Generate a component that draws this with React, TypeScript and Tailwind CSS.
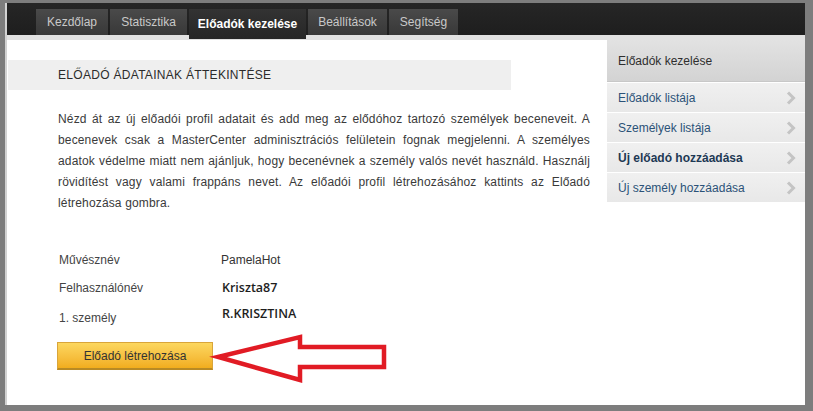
import React from "react";

const tabs = [
  { label: "Kezdőlap", w: 72 },
  { label: "Statisztika", w: 77 },
  { label: "Előadók kezelése", w: 117, active: true },
  { label: "Beállítások", w: 79 },
  { label: "Segítség", w: 69 },
];

const side = [
  { label: "Előadók listája" },
  { label: "Személyek listája" },
  { label: "Új előadó hozzáadása", active: true },
  { label: "Új személy hozzáadása" },
];

function Chevron() {
  return (
    <svg width="10" height="14" viewBox="0 0 10 14" className="shrink-0">
      <path d="M2 1.5 L7.5 7 L2 12.5" fill="none" stroke="#c4c4c4" strokeWidth="3" />
    </svg>
  );
}

export default function App() {
  return (
    <div
      className="relative w-[813px] h-[411px] bg-[#7d7d7d] pt-[3px] pl-[5px] pr-[8px] pb-[6px] overflow-hidden"
      style={{ fontFamily: '"Liberation Sans", Arial, sans-serif' }}
    >
      <div className="flex flex-col h-full border-l-2 border-[#d2d2d2] bg-white">
        {/* tab bar */}
        <div className="h-[32px] bg-gradient-to-b from-[#262626] to-[#1e1e1e] flex items-end gap-[2px] pl-[29px] shrink-0">
          {tabs.map((t) =>
            t.active ? (
              <div
                key={t.label}
                style={{ width: t.w }}
                className="relative z-10 h-[30px] -mb-[4px] bg-gradient-to-b from-[#333] to-[#262626] text-white font-bold text-[12px] flex items-start pt-[6px] justify-center"
              >
                {t.label}
              </div>
            ) : (
              <div
                key={t.label}
                style={{ width: t.w }}
                className="h-[26px] bg-gradient-to-b from-[#4a4a4a] to-[#383838] text-[#c9c9c9] text-[12px] flex items-center justify-center pb-[1px]"
              >
                {t.label}
              </div>
            )
          )}
        </div>
        <div className="h-[5px] bg-[#e1e1e1] shrink-0" />
        <div className="flex flex-1">
          {/* left column */}
          <div className="w-[600px] pt-[20px] pl-[1px]">
            <div className="w-[503px] h-[30px] bg-[#efefef] flex items-center pl-[50px] text-[12px] tracking-[0.3px] text-[#2b2b2b]">
              ELŐADÓ ÁDATAINAK ÁTTEKINTÉSE
            </div>
            <p className="ml-[50px] mt-[19px] w-[532px] text-[12px] leading-[21px] tracking-[0.15px] text-[#3a3a3a] text-justify">
              Nézd át az új előadói profil adatait és add meg az elődóhoz tartozó személyek beceneveit. A becenevek csak a MasterCenter adminisztrációs felületein fognak megjelenni. A személyes adatok védelme miatt nem ajánljuk, hogy becenévnek a személy valós nevét használd. Használj rövidítést vagy valami frappáns nevet. Az előadói profil létrehozásához kattints az Előadó létrehozása gombra.
            </p>
            <div className="ml-[51px] mt-[32px] flex flex-col text-[12px] text-[#444]">
              <div className="h-[28px] flex items-center">
                <span className="w-[162px]">Művésznév</span>
                <span className="text-[#333]">PamelaHot</span>
              </div>
              <div className="h-[28px] flex items-center">
                <span className="w-[163px]">Felhasználónév</span>
                <span
                  className="text-[12.5px] text-[#1e1e1e] font-semibold"
                  style={{ fontFamily: '"Open Sans", sans-serif' }}
                >
                  Kriszta87
                </span>
              </div>
              <div className="h-[28px] flex items-center">
                <span className="w-[163px] pt-[3px]">1. személy</span>
                <span
                  className="text-[12.5px] text-[#1e1e1e] font-semibold -mt-[4px]"
                  style={{ fontFamily: '"Open Sans", sans-serif' }}
                >
                  R.KRISZTINA
                </span>
              </div>
              <button className="mt-[12px] -ml-[2px] w-[156px] h-[28px] bg-gradient-to-b from-[#fcd75e] to-[#f1ad1c] border border-[#d9a53a] border-b-2 border-b-[#b88a24] text-[12px] text-[#333] flex items-center justify-center">
                Előadó létrehozása
              </button>
            </div>
          </div>
          {/* sidebar */}
          <div className="w-[198px] flex flex-col">
            <div className="h-[42px] bg-gradient-to-b from-[#e2e2e2] to-[#d3d3d3] flex items-center pl-[11px] text-[12px] text-[#2e2e2e] border-b border-[#c8c8c8]">
              Előadók kezelése
            </div>
            {side.map((s) => (
              <div
                key={s.label}
                className={
                  "h-[30px] bg-gradient-to-b from-[#f0f0f0] to-[#e8e8e8] border-t border-white flex items-center justify-between pl-[11px] pr-[9px] text-[12px] " +
                  (s.active ? "font-bold text-[#1d3954]" : "text-[#2b5278]")
                }
              >
                <span>{s.label}</span>
                <Chevron />
              </div>
            ))}
          </div>
        </div>
      </div>
      {/* red arrow annotation */}
      <svg className="absolute left-0 top-0 pointer-events-none" width="813" height="411">
        <polygon
          points="218,357 300,337 300,347 384,347 384,367 300,367 300,380"
          fill="none"
          stroke="#e11b24"
          strokeWidth="4.5"
          strokeLinejoin="miter"
        />
      </svg>
    </div>
  );
}
